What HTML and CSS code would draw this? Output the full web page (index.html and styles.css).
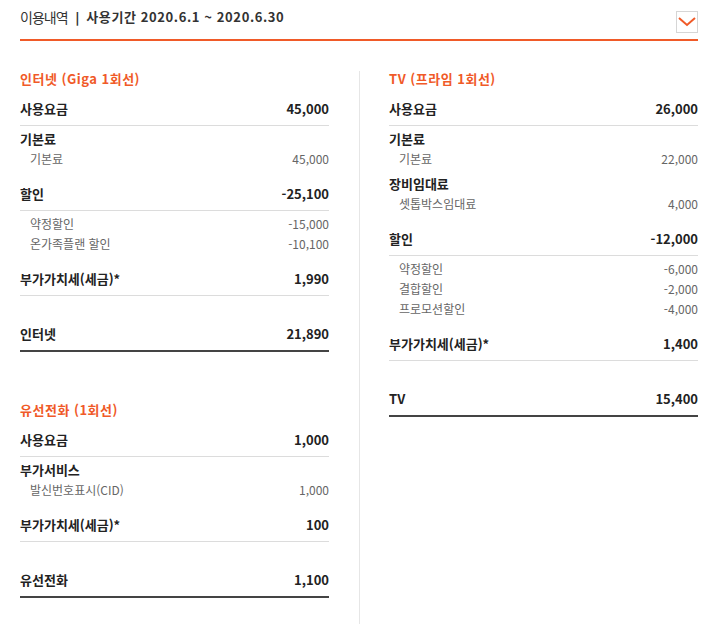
FILE: index.html
```html
<!DOCTYPE html>
<html lang="ko">
<head>
<meta charset="utf-8">
<title>이용내역</title>
<link rel="stylesheet" href="styles.css">
</head>
<body>
<div class="page">
  <header class="head">
    <h2 class="head-title"><span class="head-main">이용내역</span><span class="head-sep">|</span><span class="head-period">사용기간 2020.6.1 ~ 2020.6.30</span></h2>
    <button class="toggle" type="button" aria-label="펼치기">
      <svg width="20" height="20" viewBox="0 0 20 20"><polyline points="2,6 10,13 18,6" fill="none" stroke="#f05a28" stroke-width="2"/></svg>
    </button>
  </header>
  <div class="cols">
    <div class="col col-left">
      <section class="svc">
        <h3 class="svc-title">인터넷 (Giga 1회선)</h3>
        <div class="sum"><span>사용요금</span><span>45,000</span></div>
        <div class="detail">
          <div class="grp-head">기본료</div>
          <div class="sub"><span>기본료</span><span>45,000</span></div>
        </div>
        <div class="sum"><span>할인</span><span>-25,100</span></div>
        <div class="detail">
          <div class="sub"><span>약정할인</span><span>-15,000</span></div>
          <div class="sub"><span>온가족플랜 할인</span><span>-10,100</span></div>
        </div>
        <div class="sum"><span>부가가치세(세금)*</span><span>1,990</span></div>
        <div class="total"><span>인터넷</span><span>21,890</span></div>
      </section>
      <section class="svc svc-next">
        <h3 class="svc-title">유선전화 (1회선)</h3>
        <div class="sum"><span>사용요금</span><span>1,000</span></div>
        <div class="detail">
          <div class="grp-head">부가서비스</div>
          <div class="sub"><span>발신번호표시(CID)</span><span>1,000</span></div>
        </div>
        <div class="sum"><span>부가가치세(세금)*</span><span>100</span></div>
        <div class="total"><span>유선전화</span><span>1,100</span></div>
      </section>
    </div>
    <div class="col col-right">
      <section class="svc">
        <h3 class="svc-title">TV (프라임 1회선)</h3>
        <div class="sum"><span>사용요금</span><span>26,000</span></div>
        <div class="detail">
          <div class="grp-head">기본료</div>
          <div class="sub"><span>기본료</span><span>22,000</span></div>
          <div class="grp-head grp-more">장비임대료</div>
          <div class="sub"><span>셋톱박스임대료</span><span>4,000</span></div>
        </div>
        <div class="sum"><span>할인</span><span>-12,000</span></div>
        <div class="detail">
          <div class="sub"><span>약정할인</span><span>-6,000</span></div>
          <div class="sub"><span>결합할인</span><span>-2,000</span></div>
          <div class="sub"><span>프로모션할인</span><span>-4,000</span></div>
        </div>
        <div class="sum"><span>부가가치세(세금)*</span><span>1,400</span></div>
        <div class="total"><span>TV</span><span>15,400</span></div>
      </section>
    </div>
  </div>
</div>
</body>
</html>
```

FILE: styles.css
```css
html, body {
  margin: 0;
  padding: 0;
  background: #fff;
}
body {
  font-family: "Noto Sans CJK KR", "Noto Sans", sans-serif;
  color: #222;
  font-size: 13px;
}
.page {
  width: 678px;
  margin-left: 20px;
}
.head {
  display: flex;
  justify-content: space-between;
  align-items: flex-start;
  height: 39px;
  border-bottom: 2px solid #f05a28;
}
.head-title {
  margin: 7px 0 0;
  line-height: 20px;
  font-size: 13px;
  font-weight: 700;
  color: #333;
  display: flex;
  align-items: center;
}
.head-main {
  font-size: 14px;
  font-weight: 400;
  letter-spacing: -1px;
  color: #333;
}
.head-sep {
  margin: 0 7px 0 8px;
  font-size: 12px;
  font-weight: 900;
}
.head-period {
  letter-spacing: 0.6px;
}
.toggle {
  margin-top: 11px;
  width: 22px;
  height: 22px;
  padding: 0;
  border: 1px solid #d6d6d6;
  background: #fff;
  display: flex;
  align-items: center;
  justify-content: center;
}
.toggle svg {
  display: block;
}
.cols {
  display: grid;
  grid-template-columns: 340px 1fr;
  margin-top: 30px;
}
.col-left {
  padding-right: 30px;
  border-right: 1px solid #e6e6e6;
  padding-bottom: 40px;
}
.col-right {
  padding-left: 29px;
}
.svc-title {
  margin: 0 0 12px;
  font-size: 13px;
  line-height: 16px;
  font-weight: 700;
  letter-spacing: 0.5px;
  color: #f05a28;
}
.svc-next {
  margin-top: 50px;
}
.sum, .total, .sub {
  display: flex;
  justify-content: space-between;
}
.sum {
  line-height: 20px;
  padding-bottom: 6px;
  border-bottom: 1px solid #dcdcdc;
  font-weight: 700;
  color: #222;
}
.detail {
  padding: 3px 0 15px;
}
.grp-head {
  line-height: 20px;
  font-weight: 700;
  color: #222;
}
.grp-more {
  margin-top: 5px;
}
.sub {
  line-height: 20px;
  padding-left: 10px;
  font-size: 12px;
  color: #666;
}
.total {
  margin-top: 28px;
  line-height: 20px;
  padding-bottom: 6px;
  border-bottom: 2px solid #444;
  font-weight: 700;
  color: #222;
}
```
